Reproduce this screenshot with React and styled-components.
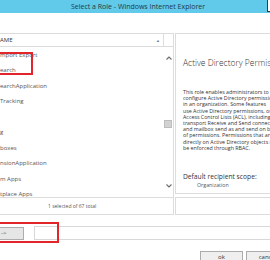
import React from "react";
import styled, { createGlobalStyle } from "styled-components";

const GlobalStyle = createGlobalStyle`
  html, body {
    margin: 0;
    padding: 0;
    background: #ffffff;
  }
  body {
    width: 270px;
    height: 260px;
    overflow: hidden;
    font-family: "Open Sans", "Noto Sans", sans-serif;
    color: #444;
  }
`;

const Window = styled.div`
  position: relative;
  width: 270px;
  height: 260px;
  overflow: hidden;
  display: flex;
  flex-direction: column;
`;

const TitleBar = styled.div`
  position: relative;
  flex-shrink: 0;
  height: 13px;
  background: #61c9ea;
  display: flex;
  align-items: center;
  justify-content: center;
`;

const TitleText = styled.span`
  font-size: 7px;
  line-height: 13px;
  color: #1f3a46;
  margin-left: 6px;
`;

const CloseBox = styled.div`
  position: absolute;
  top: 0;
  right: -12px;
  width: 14px;
  height: 11px;
  background: #ffffff;
  border-left: 1px solid #3a3a3a;
  border-bottom: 1px solid #3a3a3a;
`;

const Content = styled.div`
  padding-top: 20px;
  display: grid;
  grid-template-columns: 174px 1fr;
  grid-template-rows: 164px 18px;
  column-gap: 1px;
`;

const ListPanel = styled.div`
  border-top: 1px solid #dcdcdc;
  border-right: 1px solid #dcdcdc;
  display: flex;
  flex-direction: column;
`;

const ListHeader = styled.div`
  height: 12px;
  border-bottom: 1px solid #dcdcdc;
  display: flex;
`;

const HeaderCell = styled.div`
  width: 164px;
  border-right: 1px solid #dcdcdc;
  display: flex;
  align-items: center;
  justify-content: space-between;
  padding-right: 3px;
  box-sizing: border-box;
  font-size: 6px;
  color: #333;
`;

const SortArrow = styled.span`
  font-size: 4px;
  color: #777;
`;

const ListBody = styled.div`
  flex: 1;
  display: flex;
  overflow: hidden;
`;

const Rows = styled.div`
  width: 164px;
  padding-top: 1px;
`;

const Row = styled.div`
  height: 15.45px;
  line-height: 15.45px;
  font-size: 6px;
  color: #555;
  white-space: nowrap;
  overflow: hidden;
`;

const Scrollbar = styled.div`
  width: 9px;
  display: flex;
  flex-direction: column;
`;

const ArrowCell = styled.div`
  height: 22px;
  display: flex;
  align-items: center;
  justify-content: center;
`;

const Track = styled.div`
  flex: 1;
`;

const Thumb = styled.div`
  margin-top: 51px;
  width: 8px;
  height: 8px;
  box-sizing: border-box;
  background: #d2d2d2;
  border: 1px solid #bdbdbd;
`;

const DetailPane = styled.div`
  border: 1px solid #dcdcdc;
  border-right: none;
  height: 161px;
  padding: 23px 0 0 7px;
  box-sizing: border-box;
  white-space: nowrap;
  overflow: hidden;
  color: #444;
`;

const DetailTitle = styled.div`
  font-size: 8.5px;
  font-weight: 300;
  line-height: 11px;
  color: #333;
`;

const DetailBody = styled.div`
  margin-top: 21px;
  font-size: 5.3px;
  line-height: 6.2px;
  color: #333;
`;

const Line = styled.div`
  height: 6.2px;
  overflow: visible;
`;

const ScopeLabel = styled.div`
  margin-top: 21px;
  font-size: 6.7px;
  line-height: 9px;
  color: #333;
`;

const ScopeValue = styled.div`
  margin-top: 1px;
  padding-left: 14px;
  font-size: 5.3px;
  line-height: 7px;
  color: #555;
`;

const StatusCell = styled.div`
  border: 1px solid #dcdcdc;
  border-left: none;
  ${(p) => p.$right && "border-left: 1px solid #dcdcdc; border-right: none;"}
  display: flex;
  align-items: center;
  padding-left: 48px;
  font-size: 5px;
  color: #555;
`;

const AddRow = styled.div`
  margin-top: 11px;
  display: flex;
  align-items: center;
  margin-right: -6px;
`;

const AddButton = styled.div`
  width: 24px;
  height: 13px;
  box-sizing: border-box;
  background: #e6e6e6;
  border: 1px solid #adadad;
  border-left: none;
  font-size: 6px;
  line-height: 11px;
  padding-left: 1px;
  color: #444;
`;

const TextBox = styled.div`
  flex: 1;
  margin-left: 10px;
  height: 14px;
  box-sizing: border-box;
  border: 1px solid #d8d8d8;
`;

const ButtonRow = styled.div`
  margin-top: 11px;
  display: flex;
  justify-content: flex-end;
  gap: 3px;
  margin-right: -19px;
`;

const DialogButton = styled.div`
  width: 43px;
  height: 14px;
  box-sizing: border-box;
  background: #efefef;
  border: 1px solid #acacac;
  font-size: 6px;
  line-height: 11px;
  text-align: center;
  color: #333;
`;

const Highlight = styled.div`
  position: absolute;
  border: 2px solid #e2252b;
  box-sizing: border-box;
  left: -2px;
  top: ${(p) => p.$top}px;
  width: ${(p) => p.$width}px;
  height: ${(p) => p.$height}px;
`;

const Chevron = ({ up }) => (
  <svg width="6" height="4" viewBox="0 0 6 4">
    <path
      d={up ? "M0.5 3.5 L3 1 L5.5 3.5" : "M0.5 0.5 L3 3 L5.5 0.5"}
      fill="none"
      stroke="#6b6b6b"
      strokeWidth="1.1"
    />
  </svg>
);

const roles = [
  "mport Export",
  "earch",
  "earchApplication",
  "Tracking",
  "",
  "g",
  "boxes",
  "nsionApplication",
  "m Apps",
  "tplace Apps",
];

const description = [
  "This role enables administrators to",
  "configure Active Directory permissions",
  "in an organization. Some features",
  "use Active Directory permissions, or",
  "Access Control Lists (ACL), including",
  "transport Receive and Send connectors",
  "and mailbox send as and send on behalf",
  "of permissions. Permissions that are set",
  "directly on Active Directory objects may not",
  "be enforced through RBAC.",
];

export default function App() {
  return (
    <Window>
      <GlobalStyle />
      <TitleBar>
        <TitleText>Select a Role - Windows Internet Explorer</TitleText>
        <CloseBox />
      </TitleBar>
      <Content>
        <ListPanel>
          <ListHeader>
            <HeaderCell>
              <span>AME</span>
              <SortArrow>▲</SortArrow>
            </HeaderCell>
          </ListHeader>
          <ListBody>
            <Rows>
              {roles.map((r, i) => (
                <Row key={i}>{r}</Row>
              ))}
            </Rows>
            <Scrollbar>
              <ArrowCell>
                <Chevron up />
              </ArrowCell>
              <Track>
                <Thumb />
              </Track>
              <ArrowCell>
                <Chevron />
              </ArrowCell>
            </Scrollbar>
          </ListBody>
        </ListPanel>
        <DetailPane>
          <DetailTitle>Active Directory Permissions</DetailTitle>
          <DetailBody>
            {description.map((line, i) => (
              <Line key={i}>{line}</Line>
            ))}
          </DetailBody>
          <ScopeLabel>Default recipient scope:</ScopeLabel>
          <ScopeValue>Organization</ScopeValue>
        </DetailPane>
        <StatusCell>1 selected of 67 total</StatusCell>
        <StatusCell $right />
      </Content>
      <AddRow>
        <AddButton>-&gt;</AddButton>
        <TextBox />
      </AddRow>
      <ButtonRow>
        <DialogButton>ok</DialogButton>
        <DialogButton>cancel</DialogButton>
      </ButtonRow>
      <Highlight $top={52} $width={35} $height={23} />
      <Highlight $top={222} $width={61} $height={21} />
    </Window>
  );
}
